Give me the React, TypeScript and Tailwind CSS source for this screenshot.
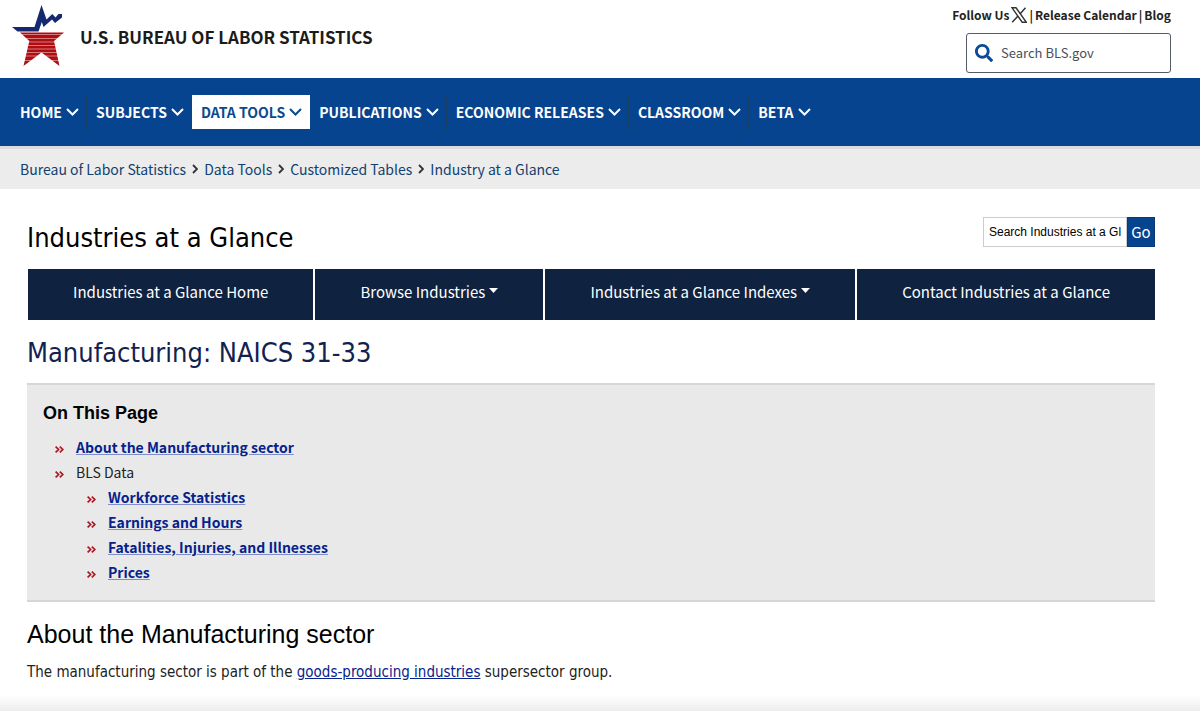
import { FaSearch } from 'react-icons/fa'
import clsx from 'clsx'

interface NavItem {
  label: string
  active?: boolean
}

const mainNav: NavItem[] = [
  { label: 'HOME' },
  { label: 'SUBJECTS' },
  { label: 'DATA TOOLS', active: true },
  { label: 'PUBLICATIONS' },
  { label: 'ECONOMIC RELEASES' },
  { label: 'CLASSROOM' },
  { label: 'BETA' },
]

const breadcrumbs = [
  'Bureau of Labor Statistics',
  'Data Tools',
  'Customized Tables',
  'Industry at a Glance',
]

const sectionNav = [
  { label: 'Industries at a Glance Home', menu: false },
  { label: 'Browse Industries', menu: true },
  { label: 'Industries at a Glance Indexes', menu: true },
  { label: 'Contact Industries at a Glance', menu: false },
]

const dataLinks = [
  'Workforce Statistics',
  'Earnings and Hours',
  'Fatalities, Injuries, and Illnesses',
  'Prices',
]

const listLink = 'font-bold text-[#06228c] underline decoration-[#7d8fc6]'

function Logo() {
  return (
    <svg viewBox="0 0 52 62" className="h-[62px] w-[52px] shrink-0" aria-hidden="true">
      <path
        d="M0 22H22.500L29.500 0L34.500 14.500L40.300 9L43.500 12.500L46.500 9H50V12.500L43 18L40 14.500L31.500 22L29.800 17L26.500 26.500H5.500Z"
        fill="#14296f"
      />
      <path d="M8 27.500H52L42 36L47.500 61L29.500 47.500L11.500 61L17.300 36Z" fill="#b00d12" />
      <path
        d="M10 29.500H50M14 33.500H46M16 37H43M16 40.500H43M15 44H44M14 47.500H45M13 51H46M12 55.500H47"
        stroke="#fff"
        strokeOpacity="0.45"
        strokeWidth="1"
      />
    </svg>
  )
}

function XLogo() {
  return (
    <svg viewBox="0 0 16 16" className="h-4 w-4" fill="none" stroke="#333">
      <path d="M1 .8H5L15.200 15.200H11.200Z" strokeWidth="1.400" />
      <path d="M14.500 .8L9 7M7 9L1.200 15.200" strokeWidth="1.500" />
    </svg>
  )
}

function Chevron() {
  return (
    <svg viewBox="0 0 13 8" className="h-2 w-[13px]" fill="none" stroke="currentColor" strokeWidth="2">
      <path d="M1 1L6.500 6.500L12 1" />
    </svg>
  )
}

function Marker() {
  return (
    <svg viewBox="0 0 9 7" className="mt-1 h-[7px] w-[9px] shrink-0" fill="none" stroke="#aa1822" strokeWidth="1.700">
      <path d="M.6 .6L3.600 3.500L.6 6.400M4.800 .6L7.800 3.500L4.800 6.400" />
    </svg>
  )
}

function Header() {
  return (
    <header className="flex h-[78px] items-start justify-between pr-[29px] pl-3">
      <a href="#" className="flex gap-4 pt-[5px]">
        <Logo />
        <span className="pt-5 text-[17px] leading-6 font-bold text-[#1b1b1b]">
          U.S. BUREAU OF LABOR STATISTICS
        </span>
      </a>
      <div className="flex flex-col items-end gap-2 pt-[5px]">
        <div className="flex items-center gap-[2px] text-xs leading-5 font-bold text-[#222]">
          <a href="#">Follow Us</a>
          <a href="#" aria-label="X">
            <XLogo />
          </a>
          <span>|</span>
          <a href="#">Release Calendar</a>
          <span>|</span>
          <a href="#">Blog</a>
        </div>
        <label className="flex h-10 w-[205px] items-center gap-2 rounded-[3px] border border-[#565c65] px-2">
          <FaSearch className="h-[18px] w-[18px] shrink-0 text-[#0b4a94]" />
          <input
            type="text"
            aria-label="Search BLS.gov"
            placeholder="Search BLS.gov"
            className="min-w-0 flex-1 text-[13px] outline-none placeholder:text-[#4a4f58]"
          />
        </label>
      </div>
    </header>
  )
}

function MainNav() {
  return (
    <nav className="flex h-[68px] items-center bg-[#07448f] pl-[11px]">
      {mainNav.map((item, index) => (
        <button
          key={item.label}
          className={clsx(
            'flex h-[34px] items-center gap-1 border-r pr-[7px] pl-[9px] text-sm font-bold whitespace-nowrap',
            item.active ? 'border-white bg-white text-[#0b4a8a]' : 'text-white',
            !item.active && (index === 1 || index === mainNav.length - 1 ? 'border-transparent' : 'border-[#173f66]')
          )}
        >
          {item.label}
          <Chevron />
        </button>
      ))}
    </nav>
  )
}

function Breadcrumbs() {
  return (
    <nav className="flex h-[43px] items-center gap-[6px] border-t-3 border-[#dddadc] bg-[#ececec] pl-5 text-sm text-[#12416f]">
      {breadcrumbs.map((crumb, index) => (
        <span key={crumb} className="flex items-center gap-[6px]">
          {index > 0 && (
            <svg viewBox="0 0 6 10" className="h-[10px] w-[6px]" fill="none" stroke="#333" strokeWidth="1.800">
              <path d="M1 1L5 5L1 9" />
            </svg>
          )}
          <a href="#">{crumb}</a>
        </span>
      ))}
    </nav>
  )
}

export default function App() {
  return (
    <div className="flex min-h-screen flex-col bg-white font-['Noto_Sans_CJK_SC',sans-serif] text-[#222]">
      <Header />
      <MainNav />
      <Breadcrumbs />

      <main className="flex-1 pr-[45px] pl-[27px]">
        <div className="flex items-start justify-between pt-7">
          <h1 className="font-['DejaVu_Sans_Condensed','DejaVu_Sans',sans-serif] text-[27px] leading-[42px] text-black">
            Industries at a Glance
          </h1>
          <form className="flex">
            <input
              type="text"
              aria-label="Search Industries at a Glance"
              defaultValue="Search Industries at a Glance"
              className="h-[30px] w-[144px] border border-[#ccc] px-[5px] font-['Liberation_Sans',sans-serif] text-xs text-black"
            />
            <button type="button" className="h-[30px] w-7 border border-[#0a3a75] bg-[#07448f] text-[15px] text-white">
              Go
            </button>
          </form>
        </div>

        <nav className="mt-[10px] ml-px flex gap-[2px]">
          {sectionNav.map((item) => (
            <a
              key={item.label}
              href="#"
              className="flex h-[51px] flex-auto items-center justify-center gap-1 bg-[#0f2240] pb-1 text-[15px] whitespace-nowrap text-white"
            >
              {item.label}
              {item.menu && (
                <svg viewBox="0 0 9 5" className="mb-1 h-[5px] w-[9px]" fill="currentColor">
                  <path d="M0 0H9L4.500 5Z" />
                </svg>
              )}
            </a>
          ))}
        </nav>

        <h2 className="pt-3 font-['DejaVu_Sans_Condensed','DejaVu_Sans',sans-serif] text-[27px] leading-[42px] text-[#112250]">
          Manufacturing: NAICS 31-33
        </h2>

        <section className="mt-[9px] border-y-2 border-[#d6d6d6] bg-[#e9e9e9] px-4 pt-4 pb-[15px]">
          <h3 className="font-['Liberation_Sans',sans-serif] text-lg leading-6 font-bold text-black">On This Page</h3>
          <ul className="pt-[10px] pl-3 text-sm leading-[25px]">
            <li className="flex items-center gap-3">
              <Marker />
              <a href="#about" className={listLink}>
                About the Manufacturing sector
              </a>
            </li>
            <li>
              <div className="flex items-center gap-3">
                <Marker />
                BLS Data
              </div>
              <ul className="pl-8">
                {dataLinks.map((link) => (
                  <li key={link} className="flex items-center gap-3">
                    <Marker />
                    <a href="#" className={listLink}>
                      {link}
                    </a>
                  </li>
                ))}
              </ul>
            </li>
          </ul>
        </section>

        <h3 id="about" className="pt-4 font-['Liberation_Sans',sans-serif] text-[25px] leading-8 text-black">
          About the Manufacturing sector
        </h3>
        <p className="pt-[10px] font-['DejaVu_Sans_Condensed','DejaVu_Sans',sans-serif] text-[15px] leading-6">
          The manufacturing sector is part of the{' '}
          <a href="#" className="text-[#06228c] underline">
            goods-producing industries
          </a>{' '}
          supersector group.
        </p>
      </main>
      <div className="h-4 bg-linear-to-b from-white to-[#ededed]" />
    </div>
  )
}
